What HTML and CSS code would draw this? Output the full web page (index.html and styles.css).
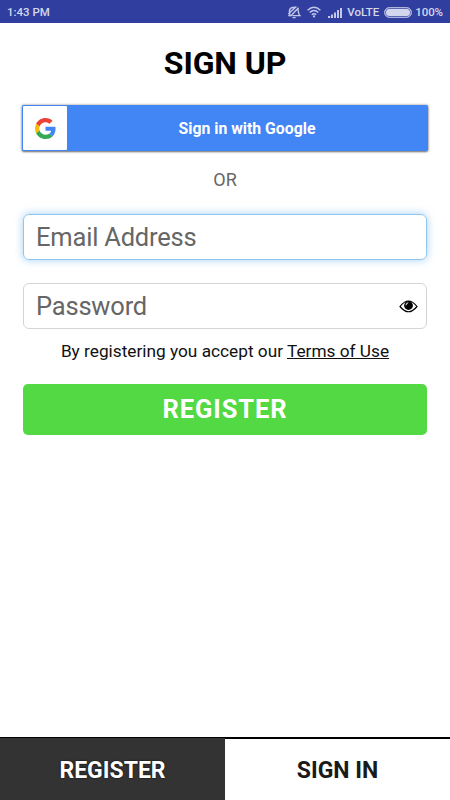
FILE: index.html
```html
<!DOCTYPE html>
<html lang="en">
<head>
    <meta charset="UTF-8">
    <meta name="viewport" content="width=device-width, initial-scale=1.0">
    <title>Sign Up</title>
    <link rel="stylesheet" href="styles.css">
</head>
<body>
    <div class="status-bar">
        <span class="time">1:43 PM</span>
        <div class="status-icons">
            <svg class="bell" width="14" height="14" viewBox="0 0 14 14" fill="none" stroke="#c3c8e8" stroke-width="1.4">
                <path d="M1.2 10.6 H2.8 C3 8.5 2 7 2.6 5 C3.2 3 5 2.2 7.6 2.2 M10.8 4 C11.8 6 10.8 8.5 12.8 10.6 H5.5 M5.6 12.6 H8.6 M1.2 9 L9.4 1.4 M3.4 11.2 L11.6 2.8"/>
            </svg>
            <svg class="wifi" width="14" height="12" viewBox="0 0 14 12" fill="none" stroke="#c3c8e8" stroke-width="1.4">
                <path d="M.6 4.2 Q7-1.6 13.4 4.2 M2.7 6.5 Q7 2.6 11.3 6.5 M4.8 8.7 Q7 6.8 9.2 8.7"/>
                <circle cx="7" cy="10.4" r="1.1" fill="#c3c8e8" stroke="none"/>
            </svg>
            <svg class="signal" width="14" height="11" viewBox="0 0 14 11" fill="#c3c8e8">
                <path d="M0 9h2.2v2H0zM3 7.5h2V11H3zM6 5.5h2V11H6zM9 3h2v8H9zM12 1h2v10h-2z"/>
            </svg>
            <span class="network">VoLTE</span>
            <span class="battery"></span>
            <span class="percent">100%</span>
        </div>
    </div>

    <div class="signup-container">
        <h1>SIGN UP</h1>
        <button class="google-button">
            <span class="google-logo">
                <svg width="21" height="21" viewBox="0 0 48 48">
                    <path fill="#EA4335" d="M24 9.5c3.54 0 6.71 1.22 9.21 3.6l6.85-6.85C35.9 2.38 30.47 0 24 0 14.62 0 6.51 5.38 2.56 13.22l7.98 6.19C12.43 13.72 17.74 9.5 24 9.5z"/>
                    <path fill="#4285F4" d="M46.98 24.55c0-1.57-.15-3.09-.38-4.55H24v9.02h12.94c-.58 2.96-2.26 5.48-4.78 7.18l7.73 6c4.51-4.18 7.09-10.36 7.09-17.65z"/>
                    <path fill="#FBBC05" d="M10.53 28.59c-.48-1.45-.76-2.99-.76-4.59s.27-3.14.76-4.59l-7.98-6.19C.92 16.46 0 20.12 0 24c0 3.88.92 7.54 2.56 10.78l7.97-6.19z"/>
                    <path fill="#34A853" d="M24 48c6.48 0 11.93-2.13 15.89-5.81l-7.73-6c-2.15 1.45-4.92 2.3-8.16 2.3-6.26 0-11.57-4.22-13.47-9.91l-7.98 6.19C6.51 42.62 14.62 48 24 48z"/>
                </svg>
            </span>
            <span class="google-text">Sign in with Google</span>
        </button>
        <p class="or">OR</p>
        <input class="field active" type="email" placeholder="Email Address">
        <div class="password-row field">
            <input type="password" placeholder="Password">
            <svg class="eye" width="19" height="13" viewBox="0 0 19 13">
                <path d="M1 6.5 Q9.5-4.5 18 6.5 Q9.5 17 1 6.5z" fill="#fff" stroke="#000" stroke-width="1.2"/>
                <circle cx="9.5" cy="5.5" r="4.4"/>
                <path d="M7 5.3 Q7 3 9.3 2.8" fill="none" stroke="#fff" stroke-width="1"/>
            </svg>
        </div>
        <p class="terms">By registering you accept our <a href="#">Terms of Use</a></p>
        <button class="register-button">REGISTER</button>
    </div>

    <div class="tabs">
        <a class="tab selected" href="#">REGISTER</a>
        <a class="tab" href="#">SIGN IN</a>
    </div>
</body>
</html>
```
FILE: styles.css
```css
* {
    box-sizing: border-box;
}
body {
    font-family: Roboto, Arial, sans-serif;
    background-color: #fff;
    color: #000;
    margin: 0;
    height: 800px;
    display: flex;
    flex-direction: column;
    overflow: hidden;
}
.status-bar {
    display: flex;
    justify-content: space-between;
    align-items: center;
    height: 23px;
    padding: 1px 7px 0;
    background-color: #303f9f;
    color: #d3d7ee;
    font-size: 11.5px;
    font-weight: 500;
}
.status-icons {
    display: flex;
    align-items: center;
}
.bell {
    margin-right: 6px;
}
.wifi {
    margin-right: 7px;
}
.signal {
    margin-right: 5px;
}
.battery {
    width: 28px;
    height: 11px;
    margin: 0 3px 0 5px;
    border: 1px solid #aeb4dc;
    border-radius: 6px;
    background-color: #d3d7ee;
    box-shadow: inset 0 0 0 1px #5a66b4;
}
.percent {
    letter-spacing: -0.1px;
}
.signup-container {
    flex: 1;
    padding: 0 23px;
    text-align: center;
}
h1 {
    margin: 21px 0 23px;
    font-size: 32px;
    line-height: 38px;
    letter-spacing: -0.1px;
}
button {
    border: none;
    color: #fff;
    font-family: inherit;
    font-weight: bold;
}
.google-button {
    display: flex;
    align-items: center;
    width: 406px;
    height: 46px;
    margin: 0 -1px;
    padding: 1px;
    border-radius: 2px;
    background-color: #4285f4;
    box-shadow: 0 0 2px 1px rgba(0, 0, 0, 0.2), 0 1px 2px rgba(0, 0, 0, 0.45);
    font-size: 15.8px;
}
.google-logo {
    display: flex;
    align-items: center;
    justify-content: center;
    width: 44px;
    height: 44px;
    border-radius: 1px;
    background-color: #fff;
}
.google-text {
    flex: 1;
}
.or {
    margin: 18px 0 23px;
    color: #666;
    font-size: 18px;
    line-height: 22px;
}
.field {
    width: 100%;
    height: 46px;
    margin-bottom: 23px;
    border: 1px solid #d4d4d4;
    border-radius: 6px;
}
input {
    display: block;
    padding: 0 12px 1px;
    outline: none;
    background: none;
    font-family: inherit;
    font-size: 25.5px;
    letter-spacing: -0.2px;
}
input::placeholder {
    color: #666;
}
.field.active {
    border-color: #90c5ef;
    box-shadow: 0 0 8px rgba(102, 175, 233, 0.6);
}
.password-row {
    display: flex;
    align-items: center;
    margin-bottom: 12px;
    padding-right: 8px;
}
.password-row input {
    flex: 1;
    min-width: 0;
    border: none;
}
.terms {
    margin: 0 0 23px;
    font-size: 17.25px;
    line-height: 20px;
    color: #111;
}
.terms a {
    color: inherit;
}
.register-button {
    display: block;
    width: 100%;
    height: 51px;
    padding: 0 0 2px;
    border-radius: 5px;
    background-color: #53d943;
    font-size: 25.5px;
    letter-spacing: 0.9px;
}
.tabs {
    display: flex;
    height: 63px;
    border-top: 2px solid #000;
}
.tab {
    flex: 1;
    color: #1a1a1a;
    font-size: 23px;
    font-weight: bold;
    line-height: 64px;
    text-align: center;
    text-decoration: none;
}
.tab.selected {
    margin-top: -1px;
    padding-top: 1px;
    background-color: #333;
    color: #fff;
    text-shadow: 0 0 2px #000;
}
```
